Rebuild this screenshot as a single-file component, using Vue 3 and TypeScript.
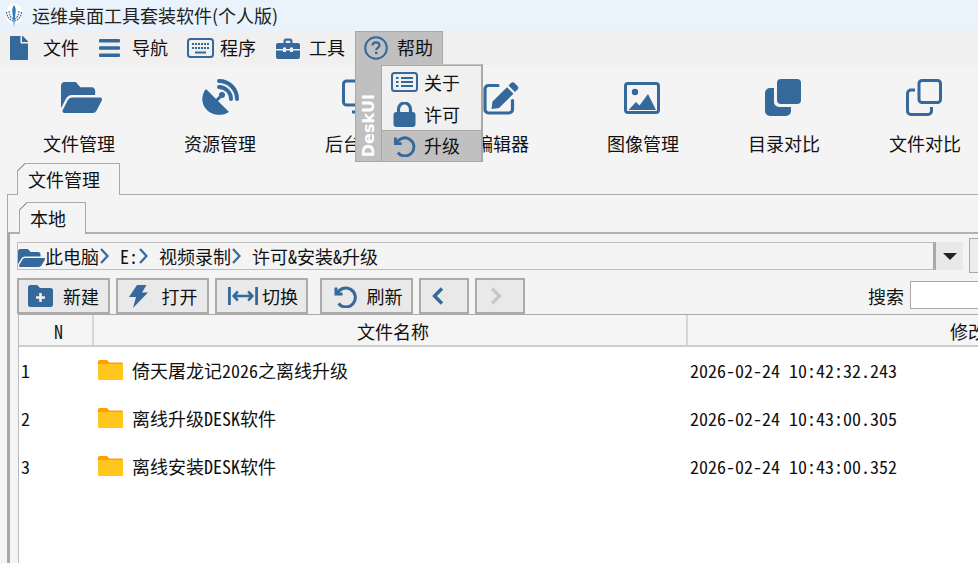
<script setup lang="ts">
const FILE = 'M224 136V0H24C10.7 0 0 10.7 0 24v464c0 13.3 10.7 24 24 24h336c13.3 0 24-10.7 24-24V160H248c-13.2 0-24-10.8-24-24zm160-14.1v6.1H256V0h6.1c6.4 0 12.5 2.5 17 7l97.9 98c4.5 4.5 7 10.6 7 16.9z'
const OPEN = 'M572.694 292.093L500.27 416.248A63.997 63.997 0 0 1 444.989 448H45.025c-18.523 0-30.064-20.093-20.731-36.093l72.424-124.155A64 64 0 0 1 152 256h399.964c18.523 0 30.064 20.093 20.73 36.093zM152 224h328v-48c0-26.51-21.49-48-48-48H272l-64-64H48C21.49 64 0 85.49 0 112v278.046l69.077-118.418C86.214 242.25 117.989 224 152 224z'
const rows = [
  { n: 1, name: '倚天屠龙记2026之离线升级', time: '2026-02-24 10:42:32.243' },
  { n: 2, name: '离线升级DESK软件', time: '2026-02-24 10:43:00.305' },
  { n: 3, name: '离线安装DESK软件', time: '2026-02-24 10:43:00.352' },
]
const crumbs = [
  { text: '此电脑', cls: 's1' },
  { text: 'E:', cls: 's2' },
  { text: '视频录制', cls: 's3' },
]
</script>

<template>
  <div class="app">
    <header class="title">
      <svg class="logo" viewBox="0 0 18 24">
        <ellipse cx="9" cy="11" rx="8.500" ry="10.500" fill="#fff" />
        <path d="M9 2c1.600 2.500 2.200 5 1.500 8L9 24 7.500 10C6.800 7 7.400 4.500 9 2z" fill="#2f78b8" />
        <path d="M1.500 9c.5 4.500 2.500 7.500 6.500 9M16.500 9c-.5 4.500-2.500 7.500-6.500 9M4 8c.5 4 1.500 6.500 4 8M14 8c-.5 4-1.500 6.500-4 8" stroke="#3f6d9c" stroke-width="1.200" fill="none" stroke-dasharray="1.800 .8" />
      </svg>
      <span>运维桌面工具套装软件(个人版)</span>
    </header>

    <nav class="menu">
      <div class="mi m1">
        <svg class="ic" width="18" height="24" viewBox="0 0 384 512"><path :d="FILE" /></svg><span>文件</span>
      </div>
      <div class="mi m2">
        <svg class="ic" width="21" height="20" viewBox="0 0 21 20"><rect y="1" width="21" height="3.400" rx="1" /><rect y="8.300" width="21" height="3.400" rx="1" /><rect y="15.600" width="21" height="3.400" rx="1" /></svg><span>导航</span>
      </div>
      <div class="mi m3">
        <svg class="ic" width="27" height="20" viewBox="0 0 27 20">
          <rect x="1" y="1" width="25" height="18" rx="2.500" fill="none" stroke="#35689b" stroke-width="2" />
          <path d="M5 6h17M5 10h17" stroke="#35689b" stroke-width="2" stroke-dasharray="2 1" fill="none" />
          <path d="M8 14.500h11" stroke="#35689b" stroke-width="2" fill="none" />
        </svg><span>程序</span>
      </div>
      <div class="mi m4">
        <svg class="ic" width="24" height="21" viewBox="0 0 24 21">
          <path d="M7.500 5V3.200C7.500 1.500 8.500.5 10.200.5h3.600c1.700 0 2.700 1 2.700 2.700V5h-2.200V2.700H9.700V5z" />
          <path d="M2 5h20a2 2 0 0 1 2 2v4h-7V9.500h-3V11h-4V9.500H7V11H0V7a2 2 0 0 1 2-2z" />
          <path d="M0 12.500h7V14h3v-1.500h4V14h3v-1.500h7V19a2 2 0 0 1-2 2H2a2 2 0 0 1-2-2z" />
        </svg><span>工具</span>
      </div>
      <div class="mi m5 active">
        <svg class="ic" width="24" height="24" viewBox="0 0 24 24">
          <circle cx="12" cy="12" r="10.800" fill="none" stroke="#35689b" stroke-width="2" />
          <path d="M8.500 9.300C8.700 7.300 10.200 6.300 12 6.300c2 0 3.500 1.200 3.500 3 0 2.500-3.300 2.500-3.300 4.700" fill="none" stroke="#35689b" stroke-width="2.200" />
          <rect x="11" y="15.600" width="2.400" height="2.500" />
        </svg><span>帮助</span>
      </div>
    </nav>

    <section class="tools">
      <div class="tool t-open">
        <svg class="ic" width="41" height="31" viewBox="0 64 576 384" preserveAspectRatio="none"><path :d="OPEN" /></svg><span>文件管理</span>
      </div>
      <div class="tool">
        <svg class="ic" width="37" height="37" viewBox="0 0 37 37">
          <path d="M4 10 27 33C19 38 9 36 4 30-1 24-1 16 4 10z" />
          <path d="M14 22l5-5" stroke="#35689b" stroke-width="3" />
          <circle cx="20" cy="16" r="3" />
          <path d="M17 8c6 0 12 5 12 12M17 2c10 0 18 8 18 18" fill="none" stroke="#35689b" stroke-width="4" stroke-linecap="round" />
        </svg><span>资源管理</span>
      </div>
      <div class="tool">
        <svg class="ic" width="38" height="37" viewBox="0 0 38 36">
          <rect x="1.500" y="1.500" width="35" height="24" rx="3" fill="none" stroke="#35689b" stroke-width="3" />
          <path d="M15 26h8v5h-8zM10 31h18v3H10z" />
        </svg><span>后台管理</span>
      </div>
      <div class="tool t-left">
        <svg class="ic" width="36" height="37" viewBox="0 0 36 36">
          <path d="M15 6H5.500A3.500 3.500 0 0 0 2 9.500V30a3.500 3.500 0 0 0 3.500 3.500H26a3.500 3.500 0 0 0 3.500-3.500v-9" fill="none" stroke="#35689b" stroke-width="3.200" stroke-linecap="round" />
          <path d="M28 3.500a2.500 2.500 0 0 1 3.500 0l3 3a2.500 2.500 0 0 1 0 3.500l-2.500 2.500-6.500-6.500zM24 7.700l6.500 6.500L16 28.500l-7.500 1 1-7.500z" />
        </svg><span>编辑器</span>
      </div>
      <div class="tool t-left t-img">
        <svg class="ic" width="36" height="32" viewBox="0 0 36 32">
          <rect x="1.500" y="1.500" width="33" height="29" rx="2.500" fill="none" stroke="#35689b" stroke-width="3" />
          <circle cx="11" cy="10" r="3.200" />
          <path d="M4.500 28l7.500-8 3.500 3.500L24 12l8 16z" />
        </svg><span>图像管理</span>
      </div>
      <div class="tool t-left">
        <svg class="ic" width="36" height="37" viewBox="0 0 36 37">
          <rect x="12" y="0" width="24" height="25" rx="4" />
          <path d="M9 9v14a5 5 0 0 0 5 5h12v4a5 5 0 0 1-5 5H5a5 5 0 0 1-5-5V14a5 5 0 0 1 5-5z" />
        </svg><span>目录对比</span>
      </div>
      <div class="tool t-left">
        <svg class="ic" width="36" height="37" viewBox="0 0 36 37" fill="none" stroke="#35689b" stroke-width="3">
          <rect x="13" y="1.500" width="21.500" height="22" rx="3" fill="none" />
          <path d="M9 11H5a3.500 3.500 0 0 0-3.500 3.500V32A3.500 3.500 0 0 0 5 35.500h17a3.500 3.500 0 0 0 3.500-3.500v-4" fill="none" />
        </svg><span>文件对比</span>
      </div>
    </section>

    <div class="strip outer-strip"><div class="tab tab-a"><span>文件管理</span></div></div>
    <div class="outer">
      <div class="strip inner-strip"><div class="tab tab-b"><span>本地</span></div></div>
      <div class="inner">
        <div class="pathrow">
          <div class="path">
            <svg class="pfolder" width="27" height="24" viewBox="0 0 576 512"><path :d="OPEN" /></svg>
            <template v-for="c in crumbs" :key="c.text">
              <span class="seg" :class="c.cls">{{ c.text }}</span>
              <svg class="chev" width="9" height="16" viewBox="0 0 9 16" fill="none" stroke="#35689b" stroke-width="2.200"><path d="M1 1l6.500 7L1 15" /></svg>
            </template>
            <span class="seg s4">许可&amp;安装&amp;升级</span>
          </div>
          <div class="drop"><i class="tri"></i></div>
          <div class="extra"></div>
        </div>

        <div class="actions">
          <button class="btn b-w">
            <svg class="ic" width="25" height="22" viewBox="0 0 25 22">
              <path d="M2.500 0h6.700l2.800 3h10.500A2.500 2.500 0 0 1 25 5.500v14a2.500 2.500 0 0 1-2.500 2.500h-20A2.500 2.500 0 0 1 0 19.500v-17A2.500 2.500 0 0 1 2.500 0z" />
              <path d="M12.500 8v9M8 12.500h9" stroke="#eee" stroke-width="2.600" />
            </svg><span class="g1">新建</span>
          </button>
          <button class="btn b-w">
            <svg class="ic" width="20" height="24" viewBox="0 0 20 24"><path d="M9 1h9.500L14 8.500h6L5 24l3-11H1z" /></svg><span class="g2">打开</span>
          </button>
          <button class="btn b-w shift-a">
            <svg width="30" height="18" viewBox="0 0 32 18" preserveAspectRatio="none" fill="none" stroke="#35689b" stroke-width="2.600">
              <path d="M1.500 0v18M30.500 0v18" stroke-width="3" /><path d="M6 9h20M10.500 4.500 6 9l4.500 4.500M21.500 4.500 26 9l-4.500 4.500" />
            </svg><span class="g3">切换</span>
          </button>
          <button class="btn b-w sep shift-b">
            <svg width="23" height="23" viewBox="0 0 23 23" fill="none" stroke="#35689b" stroke-width="3">
              <path d="M2 2.500V9h6.500" stroke-linejoin="miter" /><path d="M3 9a9.500 9.500 0 1 1 1.500 9.500" />
            </svg><span class="g4">刷新</span>
          </button>
          <button class="btn b-n">
            <svg class="prev" width="12" height="18" viewBox="0 0 12 18" fill="none" stroke="#35689b" stroke-width="3.400"><path d="M10 1.500 2.500 9l7.500 7.500" /></svg>
          </button>
          <button class="btn b-n">
            <svg class="next" width="12" height="18" viewBox="0 0 12 18" fill="none" stroke="#c8c8c8" stroke-width="3.400"><path d="M2 1.500 9.500 9 2 16.500" /></svg>
          </button>
          <div class="search">
            <span>搜索</span><div class="sinput"></div>
          </div>
        </div>

        <div class="table">
          <div class="thead">
            <div class="th c-n">N</div>
            <div class="th c-name">文件名称</div>
            <div class="th c-time">修改时间</div>
          </div>
          <div v-for="r in rows" :key="r.n" class="row">
            <div class="c-n cell">{{ r.n }}</div>
            <div class="c-name cell">
              <svg class="folder" width="25" height="20" viewBox="0 0 25 20">
                <path d="M1.500 0h7.500l2.500 2.500H23.500A1.500 1.500 0 0 1 25 4v2H0V1.500A1.500 1.500 0 0 1 1.500 0z" fill="#ff9f00" />
                <path d="M0 4h23.500A1.500 1.500 0 0 1 25 5.500v13a1.500 1.500 0 0 1-1.500 1.500h-22A1.500 1.500 0 0 1 0 18.500z" fill="#ffc61e" />
              </svg>
              <span>{{ r.name }}</span>
            </div>
            <div class="cell c-time">{{ r.time }}</div>
          </div>
        </div>
      </div>
    </div>

    <div class="popup">
      <div class="side"><span>DeskUI</span></div>
      <div class="plist">
        <div class="pi">
          <svg class="ic" width="27" height="20" viewBox="0 0 27 20">
            <rect x="1" y="1" width="25" height="18" rx="2.500" fill="none" stroke="#35689b" stroke-width="2" />
            <path d="M5 6h2.500M5 10h2.500M5 14h2.500M10 6h12M10 10h12M10 14h12" stroke="#35689b" stroke-width="2" fill="none" />
          </svg><span>关于</span>
        </div>
        <div class="pi">
          <svg class="ic" width="22" height="25" viewBox="0 0 22 25">
            <path d="M5 12V7a6 6 0 0 1 12 0v5" fill="none" stroke="#35689b" stroke-width="3.200" />
            <rect y="10" width="22" height="15" rx="3" />
          </svg><span>许可</span>
        </div>
        <div class="pi on">
          <svg width="22" height="22" viewBox="0 0 23 23" fill="none" stroke="#35689b" stroke-width="3">
            <path d="M2 2.500V9h6.500" /><path d="M3 9a9.500 9.500 0 1 1 1.500 9.500" />
          </svg><span>升级</span>
        </div>
      </div>
    </div>
  </div>
</template>

<style>
html, body { margin: 0; padding: 0; overflow: hidden; }
</style>

<style scoped>
.app {
  position: relative;
  width: 978px;
  height: 563px;
  overflow: hidden;
  background: #f4f4f4;
  color: #111;
  font: 18px/24px "Noto Sans Mono CJK SC", "Noto Sans CJK SC", "Liberation Mono", monospace;
  display: flex;
  flex-direction: column;
}
.ic { fill: #35689b; flex: none; }
.title {
  height: 31px;
  background: #eaf3fb;
  display: flex;
  align-items: center;
  padding: 0 0 2px 5px;
  box-sizing: border-box;
  font-family: "Noto Sans CJK SC", sans-serif;
  color: #222;
  flex: none;
}
.logo { width: 18px; height: 24px; margin-right: 9px; flex: none; }
.menu { height: 34px; background: #f0f0f0; display: flex; align-items: stretch; flex: none; }
.mi { display: flex; align-items: center; padding: 0 10px; font-family: "Noto Sans CJK SC", sans-serif; }
.mi span { position: relative; top: -1px; }
.m1 svg { margin-right: 15px; }
.m2 svg { margin-right: 12px; }
.m3 { padding-left: 9px; }
.m3 svg { margin-right: 6px; }
.m4 svg { margin-right: 9px; }
.m5 { padding-left: 9px; }
.m5 svg { margin-right: 9px; }
.active { background: #c0c0c0; box-shadow: inset 0 0 0 1px #a8a8a8; }
.tools {
  height: 98px;
  flex: none;
  display: flex;
  padding-left: 8.500px;
  font-family: "Noto Sans CJK SC", sans-serif;
}
.tool { width: 141px; flex: none; position: relative; display: flex; flex-direction: column; align-items: center; padding-top: 14px; box-sizing: border-box; }
.tool span { position: absolute; top: 66px; }
.t-left svg { margin-left: -2px; }
.t-open svg { margin: 3px 0 0 4px; }
.t-img svg { margin-top: 3px; }
.strip { display: flex; flex: none; }
.outer-strip { height: 31px; padding-left: 17px; }
.tab {
  position: relative;
  border: 1px solid #a8a8a8;
  border-bottom: none;
  background: #f4f4f4;
  display: flex;
  align-items: center;
  box-sizing: border-box;
  margin-bottom: -1px;
  padding: 0 0 2px 10px;
  z-index: 1;
  font-family: "Noto Sans CJK SC", sans-serif;
}
.tab::before {
  content: "";
  position: absolute;
  left: -1px;
  top: -1px;
  width: 8px;
  height: 8px;
  background: linear-gradient(135deg, #f4f4f4 0 46%, #a8a8a8 46% 58%, #f4f4f4 58%);
}
.tab-a { width: 103px; height: 32px; }
.tab-b { width: 67px; height: 32px; }
.outer {
  flex: 1;
  margin-left: 7px;
  border-top: 1px solid #a8a8a8;
  border-left: 1px solid #a8a8a8;
  display: flex;
  flex-direction: column;
  min-height: 0;
}
.inner-strip { height: 31px; padding: 7px 0 0 11px; margin-bottom: -1px; }
.inner {
  flex: 1;
  border-top: 2px solid #b0b0b0;
  border-left: 2px solid #a8a8a8;
  padding-left: 7px;
  display: flex;
  flex-direction: column;
  min-height: 0;
}
.pathrow { height: 44px; flex: none; display: flex; align-items: flex-start; position: relative; }
.path {
  margin-top: 8px;
  width: 919px;
  height: 28px;
  box-sizing: border-box;
  border: 1px solid #bdbdbd;
  border-right: 3px solid #a8a8a8;
  display: flex;
  align-items: center;
  flex: none;
  white-space: pre;
}
.pfolder { fill: #35689b; margin-top: 4px; flex: none; }
.s2 { margin-left: 11px; }
.s3 { margin-left: 11px; }
.s4 { margin-left: 11px; }
.chev { flex: none; margin-left: 1px; }
.drop { margin-top: 8px; width: 27px; height: 28px; background: #e8e8e8; display: flex; align-items: center; justify-content: center; flex: none; }
.tri { width: 0; height: 0; border: 7px solid transparent; border-top: 7px solid #222; border-bottom: 0; }
.extra { margin: 4px 0 0 6px; width: 30px; height: 35px; box-sizing: border-box; border: 1px solid #a8a8a8; background: #ececec; flex: none; }
.actions { height: 36px; flex: none; display: flex; align-items: stretch; gap: 6px; position: relative; }
.btn {
  height: 36px;
  box-sizing: border-box;
  border: 2px solid #ababab;
  background: #e9e9e9;
  padding: 0;
  display: flex;
  align-items: center;
  justify-content: center;
  color: #111;
  font: inherit;
  font-family: "Noto Sans CJK SC", sans-serif;
}
.b-w { width: 93px; }
.b-n { width: 50px; }
.sep { margin-left: 6px; }
.shift-a { padding-left: 3px; }
.shift-b { padding-left: 3px; }
.prev { margin-right: 12px; }
.next { margin-right: 8px; }
.g1 { margin-left: 10px; }
.g2 { margin-left: 14px; }
.g3 { margin-left: 4px; }
.g4 { margin-left: 10px; }
.search { margin-left: auto; display: flex; align-items: center; gap: 6px; font-family: "Noto Sans CJK SC", sans-serif; }
.sinput { width: 90px; height: 28px; box-sizing: border-box; background: #fff; border: 1px solid #a8a8a8; margin-top: -2px; margin-right: -22px; }
.table { flex: 1; background: #fff; margin-left: 1px; border-top: 1px solid #a8a8a8; border-left: 1px solid #bcbcbc; min-height: 0; }
.thead { height: 32px; box-sizing: border-box; display: flex; background: #f5f5f5; border-bottom: 2px solid #cdcdcd; }
.th { text-align: center; line-height: 32px; border-right: 2px solid #d6d6d6; box-sizing: border-box; flex: none; font-family: "Noto Sans CJK SC", sans-serif; }
.th.c-n { width: 75px; padding-left: 6px; font-family: "Noto Sans Mono CJK SC", monospace; }
.th.c-name { width: 594px; padding-left: 6px; }
.th.c-time { width: 600px; border: 0; text-align: left; padding-left: 262px; }
.row { height: 48px; display: flex; align-items: center; }
.cell { white-space: nowrap; flex: none; position: relative; top: -1px; }
.row .c-n { width: 75px; padding-left: 2px; box-sizing: border-box; }
.row .c-name { width: 594px; display: flex; align-items: center; padding-left: 4px; box-sizing: border-box; }
.row .c-time { padding-left: 2px; }
.folder { margin-right: 9px; flex: none; }
.popup { position: absolute; left: 355px; top: 64px; width: 128px; height: 98px; background: #c0c0c0; box-sizing: border-box; border: 1px solid #a8a8a8; border-top: 0; display: flex; z-index: 5; font-family: "Noto Sans CJK SC", sans-serif; }
.side { width: 25px; flex: none; display: flex; align-items: flex-end; justify-content: center; padding-bottom: 4px; box-sizing: border-box; }
.side span { writing-mode: vertical-rl; transform: rotate(180deg); color: #fff; font: 700 16px/20px "DejaVu Sans", sans-serif; }
.plist { flex: 1; background: #f0f0f0; border: 1px solid #a8a8a8; border-bottom: 0; margin-top: 1px; display: flex; flex-direction: column; }
.pi { height: 32px; display: flex; align-items: center; padding-left: 9px; }
.pi svg { width: 27px; flex: none; margin-right: 6px; }
.pi.on { background: #c0c0c0; border-top: 1px solid #a8a8a8; height: 31px; box-sizing: border-box; }
.pi.on span { position: relative; top: -1px; }
</style>
